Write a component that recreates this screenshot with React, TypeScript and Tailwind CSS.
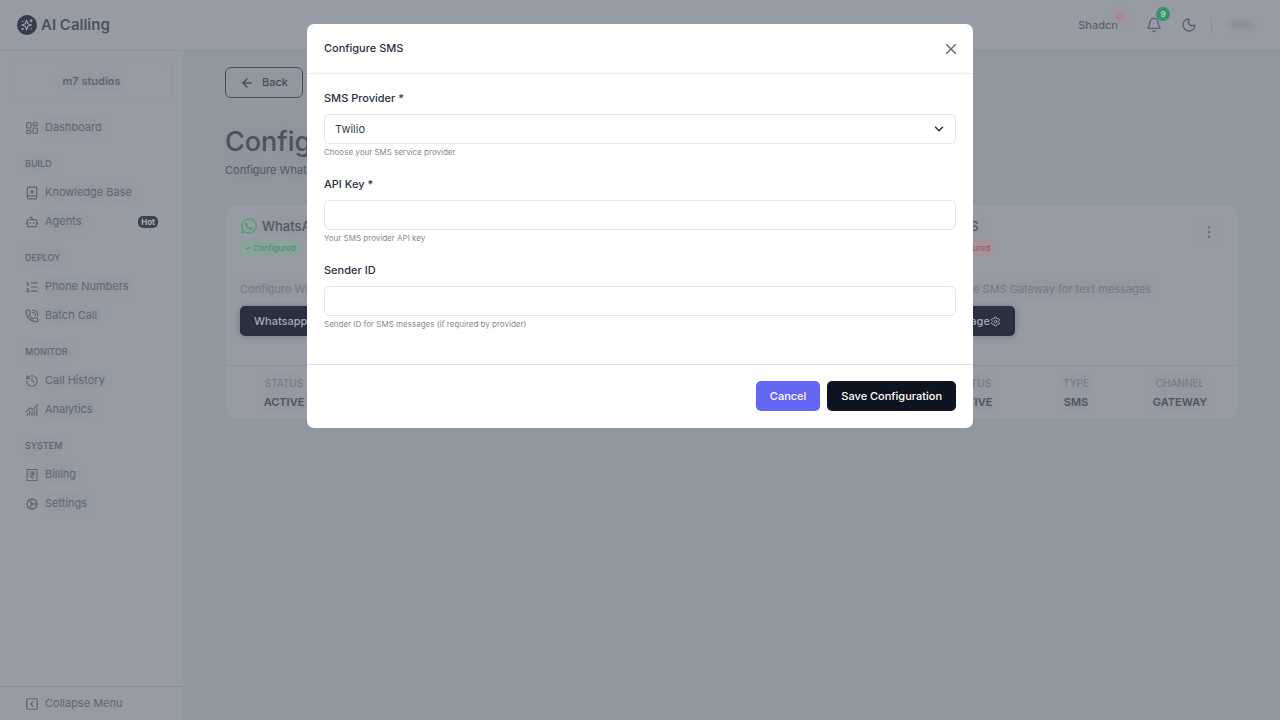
import type { ReactNode } from "react";
import {
  ArrowLeft,
  Bell,
  BookPlus,
  Bot,
  ChartNoAxesCombined,
  ChevronDown,
  Cog,
  EllipsisVertical,
  History,
  LayoutDashboard,
  ListOrdered,
  Mail,
  MessageSquare,
  Moon,
  PhoneCall,
  Settings,
  SquareChevronLeft,
  X,
} from "lucide-react";
import { FaWhatsapp } from "react-icons/fa";

function InvoiceIcon() {
  return (
    <svg viewBox="0 0 24 24" className="size-3.5" fill="none" stroke="currentColor" strokeWidth="1.8" aria-hidden="true">
      <path d="M3.5 2.5h17v19h-17z" />
      <path d="M8.5 7h8M8.5 10.5h8M8.5 7h2.5a3.5 3.5 0 0 1 0 7H9l5 4.5" />
      <path d="M3.5 7h2M3.5 11h2M3.5 15h2" />
    </svg>
  );
}

function SparkLogo() {
  return (
    <svg viewBox="0 0 20 20" className="size-5" aria-hidden="true">
      <circle cx="10" cy="10" r="10" fill="#343b4a" />
      <g fill="none" stroke="#a4a8b0" strokeWidth="1.1" strokeLinejoin="round" strokeLinecap="round">
        <path d="M9.6 5.2 L10.8 8.7 L14.4 10 L10.8 11.3 L9.6 14.9 L8.3 11.3 L4.8 10 L8.3 8.7 Z" />
        <path d="M14.2 4.6v2.4M13 5.8h2.4M5.6 13.2v1.4M4.9 13.9h1.4M13.8 13.8h.6M5.6 6.4h.2" />
      </g>
    </svg>
  );
}

type Item = { label: string; icon: ReactNode; badge?: string };

const icon = "size-3.5";
const sections: { title?: string; items: Item[] }[] = [
  { items: [{ label: "Dashboard", icon: <LayoutDashboard className={icon} /> }] },
  {
    title: "BUILD",
    items: [
      { label: "Knowledge Base", icon: <BookPlus className={icon} /> },
      { label: "Agents", icon: <Bot className={icon} />, badge: "Hot" },
    ],
  },
  {
    title: "DEPLOY",
    items: [
      { label: "Phone Numbers", icon: <ListOrdered className={icon} /> },
      { label: "Batch Call", icon: <PhoneCall className={icon} /> },
    ],
  },
  {
    title: "MONITOR",
    items: [
      { label: "Call History", icon: <History className={icon} /> },
      { label: "Analytics", icon: <ChartNoAxesCombined className={icon} /> },
    ],
  },
  {
    title: "SYSTEM",
    items: [
      { label: "Billing", icon: <InvoiceIcon /> },
      { label: "Settings", icon: <Cog className={icon} /> },
    ],
  },
];

function Sidebar() {
  return (
    <aside className="flex w-[184px] shrink-0 flex-col border-r border-[#9197a0] bg-[#979ba4] text-[11px] text-[#5f6671]">
      <div className="mx-2.5 mt-3 flex h-9 items-center justify-center rounded-md border border-[#9297a0] text-[11px] font-semibold">
        m7 studios
      </div>
      <nav className="mt-3.5 flex-1">
        {sections.map((s) => (
          <div key={s.items[0].label}>
            {s.title && <h2 className="px-[25px] pt-3.5 pb-1.5 text-[9px] leading-4 font-medium">{s.title}</h2>}
            {s.items.map((i) => (
              <a key={i.label} href="#" className="flex h-[29px] items-center gap-1.5 px-[25px]">
                {i.icon}
                <span>{i.label}</span>
                {i.badge && (
                  <span className="ml-auto rounded-[5px] bg-[#3c4351] px-[3px] text-[8px] leading-3 font-bold text-[#adb0b7] [text-shadow:none]">
                    {i.badge}
                  </span>
                )}
              </a>
            ))}
          </div>
        ))}
      </nav>
      <button type="button" className="flex h-[34px] items-center gap-1.5 border-t border-[#868d98] pl-[25px]">
        <SquareChevronLeft className={icon} />
        Collapse Menu
      </button>
    </aside>
  );
}

function Header() {
  return (
    <header className="flex h-[51px] items-center justify-between border-b border-[#8b939d] bg-[#979ba4] pr-[26px] pl-[17px] text-[#5a616d]">
      <div className="flex items-center gap-1">
        <SparkLogo />
        <span className="text-[15px] font-semibold text-[#4b5260]">AI Calling</span>
      </div>
      <div className="flex items-center">
        <span className="relative mr-7 text-[11px] font-medium">
          Shadcn
          <span className="absolute -top-1 -right-1.5 size-2 rounded-full bg-[#b0868f] shadow-[0_0_6px_2px_#a1939b]" />
        </span>
        <button type="button" aria-label="Notifications" className="relative mr-[19px]">
          <Bell className="size-4" strokeWidth={2} />
          <span className="absolute -top-2.5 -right-2 flex size-3.5 items-center justify-center rounded-full bg-[#379467] text-[8px] font-bold text-[#b9c9c3]">
            9
          </span>
        </button>
        <button type="button" aria-label="Dark mode">
          <Moon className="size-4" strokeWidth={2} />
        </button>
        <span className="mx-3.5 h-4 w-px bg-[#8a909a]" />
        <span className="ml-1 h-2 w-6 rounded-full bg-[#8b9099] blur-[2px]" />
      </div>
    </header>
  );
}

const channels = [
  { name: "WhatsApp", ok: true, about: "Configure WhatsApp", action: "Whatsapp", type: "CHAT", channel: "META", icon: <FaWhatsapp className="size-[18px] text-[#4a9f75]" /> },
  { name: "Email", ok: false, about: "Configure Email", action: "Email", type: "EMAIL", channel: "SMTP", icon: <Mail className="size-[18px]" /> },
  { name: "SMS", ok: false, about: "Configure SMS Gateway for text messages", action: "Message", type: "SMS", channel: "GATEWAY", icon: <MessageSquare className="size-[18px]" /> },
];

function Stat({ label, value }: { label: string; value: string }) {
  return (
    <div className="flex flex-1 flex-col items-center gap-[3px]">
      <dt className="text-[10px] leading-4 text-[#747a85]">{label}</dt>
      <dd className="text-[11px] leading-4 font-semibold text-[#4f5663]">{value}</dd>
    </div>
  );
}

function Main() {
  return (
    <main className="min-w-0 flex-1 bg-[#90979f] px-[41px] pt-4 text-[11px] text-[#525966]">
      <button type="button" className="flex h-[31px] items-center gap-2 rounded-md border border-[#474f5d] px-3.5 font-medium text-[#474e5b]">
        <ArrowLeft className="size-3.5" strokeWidth={2.5} />
        Back
      </button>
      <h1 className="mt-[26px] text-[27px] leading-9 font-medium text-[#4b5260]">Configure Channels</h1>
      <p className="leading-5">Configure WhatsApp, Email and SMS</p>
      <div className="mt-6 grid grid-cols-3 gap-[18px]">
        {channels.map((c) => (
          <article key={c.name} className="rounded-xl border border-[#8c949d] bg-[#979ba4]">
            <div className="px-3.5 pt-3 pb-[29px]">
              <div className="flex items-start justify-between">
                <div>
                  <h2 className="flex items-center gap-1 text-[13px] leading-[18px] font-medium">
                    {c.icon}
                    {c.name}
                  </h2>
                  <span
                    className={
                      c.ok
                        ? "mt-[5px] inline-block rounded-md bg-[#8aa39b] px-1 text-[8px] leading-4 text-[#478a68] [text-shadow:none]"
                        : "mt-[5px] inline-block rounded-md bg-[#a7929a] px-1 text-[8px] leading-4 text-[#995560] [text-shadow:none]"
                    }
                  >
                    {c.ok ? "✓ Configured" : "Not Configured"}
                  </span>
                </div>
                <button type="button" aria-label={c.name + " options"} className="flex size-[30px] items-center justify-center rounded-lg border border-[#9499a2] text-[#646b77]">
                  <EllipsisVertical className="size-4" strokeWidth={1.6} />
                </button>
              </div>
              <p className="mt-[25px] mb-[9px] leading-4 text-[#747a85]">{c.about}</p>
              <button type="button" className="flex h-[30px] items-center rounded-[5px] bg-[#293141] px-3.5 font-medium text-[#a6aab1] shadow-[0_0_6px_#717884] [text-shadow:none]">
                {c.action}
                <Settings className="size-[11px]" />
              </button>
            </div>
            <dl className="flex border-t border-[#8c929c] px-1.5 pt-[9px] pb-[9px]">
              <Stat label="STATUS" value="ACTIVE" />
              <Stat label="TYPE" value={c.type} />
              <Stat label="CHANNEL" value={c.channel} />
            </dl>
          </article>
        ))}
      </div>
    </main>
  );
}

function Field({ id, label, help, children }: { id: string; label: string; help: string; children: ReactNode }) {
  return (
    <div>
      <label htmlFor={id} className="block text-[11px] leading-4 font-medium">
        {label}
      </label>
      <div className="relative mt-2">{children}</div>
      <p id={id + "-help"} className="mt-0.5 text-[8px] leading-3 text-[#858a92]">
        {help}
      </p>
    </div>
  );
}

const control =
  "block h-[30px] w-full appearance-none rounded-[5px] border border-[#e3e5e8] bg-white px-2.5 text-[11px] text-[#374151] outline-none";

function ConfigureDialog() {
  return (
    <div className="fixed inset-0 flex items-start justify-center pt-6">
      <form role="dialog" aria-labelledby="dialog-title" className="w-full max-w-[666px] rounded-[7px] bg-white text-[#283141]">
        <div className="flex h-[50px] items-center justify-between border-b border-[#eceef0] px-[17px]">
          <h2 id="dialog-title" className="text-[11px] font-medium">
            Configure SMS
          </h2>
          <button type="button" aria-label="Close" className="-mr-1 text-[#6b6e73]">
            <X className="size-[18px]" strokeWidth={2} />
          </button>
        </div>
        <div className="flex flex-col gap-[18px] px-[17px] pt-4 pb-[34px]">
          <Field id="provider" label="SMS Provider *" help="Choose your SMS service provider">
            <select id="provider" aria-describedby="provider-help" className={control}>
              <option>Twilio</option>
            </select>
            <ChevronDown className="pointer-events-none absolute top-2 right-2.5 size-3.5" strokeWidth={2.5} />
          </Field>
          <Field id="api-key" label="API Key *" help="Your SMS provider API key">
            <input id="api-key" type="text" aria-describedby="api-key-help" className={control} />
          </Field>
          <Field id="sender" label="Sender ID" help="Sender ID for SMS messages (if required by provider)">
            <input id="sender" type="text" aria-describedby="sender-help" className={control} />
          </Field>
        </div>
        <div className="flex justify-end gap-[7px] border-t border-[#e1e3e6] px-[17px] pt-4 pb-[17px] text-[11px] font-medium text-white">
          <button type="button" className="h-[30px] rounded-[5px] bg-[#6366f1] px-3.5">
            Cancel
          </button>
          <button type="submit" className="h-[30px] rounded-[5px] bg-[#0e1320] px-3.5">
            Save Configuration
          </button>
        </div>
      </form>
    </div>
  );
}

export default function App() {
  return (
    <div className="flex min-h-screen flex-col bg-[#90979f] font-['Inter','Liberation_Sans',sans-serif]">
      <Header />
      <div className="flex flex-1 [text-shadow:0_0_8px_#868d98]">
        <Sidebar />
        <Main />
      </div>
      <ConfigureDialog />
    </div>
  );
}
